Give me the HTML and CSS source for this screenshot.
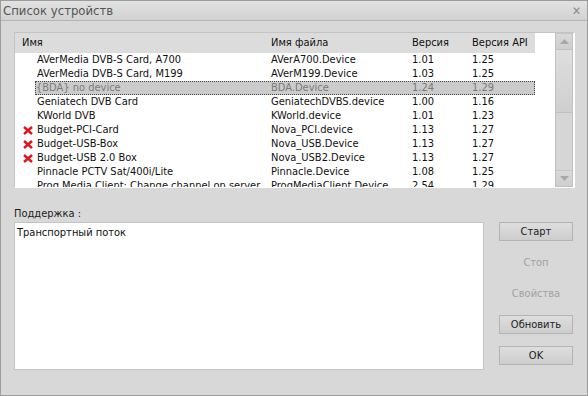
FILE: index.html
```html
<!DOCTYPE html>
<html>
<head>
<meta charset="utf-8">
<link rel="stylesheet" href="styles.css">
</head>
<body>
<div class="window">
  <div class="titlebar">
    <span class="title">Список устройств</span>
    <span class="close">✕</span>
  </div>
  <div class="content">
    <div class="listbox">
      <div class="listarea">
        <div class="row header">
          <div class="c name">Имя</div>
          <div class="c file">Имя файла</div>
          <div class="c ver">Версия</div>
          <div class="c api">Версия API</div>
        </div>
        <div class="row"><div class="c name"><span class="ic"></span>AVerMedia DVB-S Card, A700</div><div class="c file">AVerA700.Device</div><div class="c ver">1.01</div><div class="c api">1.25</div></div>
        <div class="row"><div class="c name"><span class="ic"></span>AVerMedia DVB-S Card, M199</div><div class="c file">AVerM199.Device</div><div class="c ver">1.03</div><div class="c api">1.25</div></div>
        <div class="row sel"><div class="c name"><span class="ic"></span>{BDA} no device</div><div class="c file">BDA.Device</div><div class="c ver">1.24</div><div class="c api">1.29</div></div>
        <div class="row"><div class="c name"><span class="ic"></span>Geniatech DVB Card</div><div class="c file">GeniatechDVBS.device</div><div class="c ver">1.00</div><div class="c api">1.16</div></div>
        <div class="row"><div class="c name"><span class="ic"></span>KWorld DVB</div><div class="c file">KWorld.device</div><div class="c ver">1.01</div><div class="c api">1.23</div></div>
        <div class="row"><div class="c name"><span class="ic"><svg width="10" height="9" viewBox="0 0 10 9"><path d="M1 1L9 8M9 1L1 8" stroke="#e0141e" stroke-width="2.4"/></svg></span>Budget-PCI-Card</div><div class="c file">Nova_PCI.device</div><div class="c ver">1.13</div><div class="c api">1.27</div></div>
        <div class="row"><div class="c name"><span class="ic"><svg width="10" height="9" viewBox="0 0 10 9"><path d="M1 1L9 8M9 1L1 8" stroke="#e0141e" stroke-width="2.4"/></svg></span>Budget-USB-Box</div><div class="c file">Nova_USB.Device</div><div class="c ver">1.13</div><div class="c api">1.27</div></div>
        <div class="row"><div class="c name"><span class="ic"><svg width="10" height="9" viewBox="0 0 10 9"><path d="M1 1L9 8M9 1L1 8" stroke="#e0141e" stroke-width="2.4"/></svg></span>Budget-USB 2.0 Box</div><div class="c file">Nova_USB2.Device</div><div class="c ver">1.13</div><div class="c api">1.27</div></div>
        <div class="row"><div class="c name"><span class="ic"></span>Pinnacle PCTV Sat/400i/Lite</div><div class="c file">Pinnacle.Device</div><div class="c ver">1.08</div><div class="c api">1.25</div></div>
        <div class="row"><div class="c name"><span class="ic"></span>Prog Media Client: Change channel on server</div><div class="c file">ProgMediaClient.Device</div><div class="c ver">2.54</div><div class="c api">1.29</div></div>
      </div>
      <div class="scrollbar">
        <div class="sbtn"><svg width="9" height="5" viewBox="0 0 9 5"><path d="M0 5L4.5 0L9 5Z" fill="#a8a8a8"/></svg></div>
        <div class="thumb"></div>
        <div class="track"></div>
        <div class="sbtn"><svg width="9" height="5" viewBox="0 0 9 5"><path d="M0 0L4.5 5L9 0Z" fill="#a8a8a8"/></svg></div>
      </div>
    </div>
    <div class="lower">
      <div class="support">
        <div class="label">Поддержка :</div>
        <div class="textbox">Транспортный поток</div>
      </div>
      <div class="buttons">
        <div class="btn">Старт</div>
        <div class="btn disabled">Стоп</div>
        <div class="btn disabled">Свойства</div>
        <div class="btn">Обновить</div>
        <div class="btn">OK</div>
      </div>
    </div>
  </div>
</div>
</body>
</html>
```
FILE: styles.css
```css
html, body {
  margin: 0;
  padding: 0;
}
body {
  width: 588px;
  height: 396px;
  overflow: hidden;
  font-family: "DejaVu Sans Condensed", "DejaVu Sans", Tahoma, sans-serif;
  font-size: 11px;
  color: #111;
}
.window {
  box-sizing: border-box;
  width: 588px;
  height: 396px;
  background: #d8d8d8;
  border: 1px solid #9c9c9c;
  display: flex;
  flex-direction: column;
}
.titlebar {
  height: 19px;
  flex: none;
  background: linear-gradient(#e2e2e2, #d2d2d2);
  border-bottom: 1px solid #b4b4b4;
  display: flex;
  align-items: center;
  justify-content: space-between;
  padding: 0 6px 0 2px;
}
.title {
  font-size: 13px;
  color: #555;
}
.close {
  font-size: 12px;
  color: #8a8a8a;
  font-weight: bold;
}
.content {
  padding: 11px 12px 0 13px;
  display: flex;
  flex-direction: column;
}
.listbox {
  box-sizing: border-box;
  width: 561px;
  height: 156px;
  border: 1px solid #c4c4c4;
  border-right-color: #fff;
  border-bottom-color: #fff;
  background: #fff;
  display: flex;
  overflow: hidden;
}
.listarea {
  flex: 1;
  overflow: hidden;
  background: #fff;
}
.row {
  display: flex;
  height: 14px;
  line-height: 14px;
  white-space: nowrap;
  width: 520px;
  box-sizing: border-box;
}
.row.header {
  height: 20px;
  line-height: 20px;
  background: #dcdcdc;
}
.c {
  overflow: hidden;
  box-sizing: border-box;
}
.name { width: 250px; padding-left: 8px; display: flex; align-items: center; }
.header .name { padding-left: 7px; }
.file { width: 141px; padding-left: 6px; }
.ver { width: 60px; padding-left: 6px; }
.api { width: 69px; padding-left: 6px; }
.ic {
  width: 14px;
  height: 14px;
  flex: none;
  display: flex;
  align-items: center;
}
.row.sel {
  background: #cbcbcb;
  color: #7a7a7a;
  outline: 1px dotted #444;
  outline-offset: -1px;
  margin-left: 20px;
  width: 500px;
}
.row.sel .name { width: 230px; padding-left: 1px; }
.row.sel .ic { display: none; }
.scrollbar {
  width: 16px;
  flex: none;
  display: flex;
  flex-direction: column;
  background: #d6d6d6;
  border: 1px solid #c2c2c2;
  border-top: 0;
  margin-right: 1px;
}
.sbtn {
  height: 15px;
  flex: none;
  display: flex;
  align-items: center;
  justify-content: center;
  background: linear-gradient(#d9d9d9, #cecece);
  border-top: 1px solid #c6c6c6;
}
.thumb {
  height: 62px;
  flex: none;
  background: linear-gradient(#dedede, #cfcfcf);
  border-top: 1px solid #c0c0c0;
  border-bottom: 1px solid #c0c0c0;
}
.track {
  flex: 1;
  background: #d6d6d6;
}
.lower {
  display: flex;
  margin-top: 19px;
}
.support {
  display: flex;
  flex-direction: column;
}
.label {
  height: 15px;
  line-height: 13px;
  font-size: 11px;
  color: #222;
}
.textbox {
  box-sizing: border-box;
  width: 470px;
  height: 148px;
  background: #fff;
  border: 1px solid #c4c4c4;
  padding: 2px 2px;
  line-height: 15px;
  font-size: 11px;
}
.buttons {
  margin-left: 15px;
  margin-top: 15px;
  display: flex;
  flex-direction: column;
  gap: 12px;
}
.btn {
  box-sizing: border-box;
  width: 74px;
  height: 19px;
  line-height: 17px;
  text-align: center;
  background: linear-gradient(#dedede, #cdcdcd);
  border: 1px solid #b4b4b4;
  color: #222;
}
.btn.disabled {
  background: transparent;
  border-color: transparent;
  color: #a2a2a2;
}
```
